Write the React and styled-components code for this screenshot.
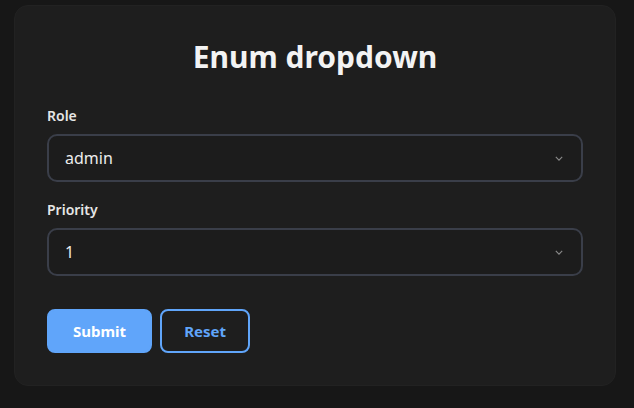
import React, { useState } from "react";
import styled, { createGlobalStyle } from "styled-components";

const roles = ["admin", "editor", "viewer"];
const priorities = ["1", "2", "3", "4", "5"];

export default function App() {
  const [role, setRole] = useState("admin");
  const [priority, setPriority] = useState("1");

  const reset = () => {
    setRole("admin");
    setPriority("1");
  };

  return (
    <>
      <GlobalStyle />
      <Page>
        <Card onSubmit={(e) => e.preventDefault()}>
          <Title>Enum dropdown</Title>
          <Field>
            <Label htmlFor="role">Role</Label>
            <SelectWrap>
              <Select id="role" value={role} onChange={(e) => setRole(e.target.value)}>
                {roles.map((r) => (
                  <option key={r} value={r}>
                    {r}
                  </option>
                ))}
              </Select>
              <Chevron />
            </SelectWrap>
          </Field>
          <Field>
            <Label htmlFor="priority">Priority</Label>
            <SelectWrap>
              <Select
                id="priority"
                value={priority}
                onChange={(e) => setPriority(e.target.value)}
              >
                {priorities.map((p) => (
                  <option key={p} value={p}>
                    {p}
                  </option>
                ))}
              </Select>
              <Chevron />
            </SelectWrap>
          </Field>
          <Actions>
            <Button type="submit" primary>
              Submit
            </Button>
            <Button type="button" onClick={reset}>
              Reset
            </Button>
          </Actions>
        </Card>
      </Page>
    </>
  );
}

function Chevron() {
  return (
    <ChevronIcon viewBox="0 0 10 6" width="8" height="5">
      <path d="M1 1l4 4 4-4" fill="none" stroke="currentColor" strokeWidth="1.4" />
    </ChevronIcon>
  );
}

const GlobalStyle = createGlobalStyle`
  html, body {
    margin: 0;
    background: #171717;
    font-family: "Noto Sans", "Open Sans", sans-serif;
  }
  * { box-sizing: border-box; }
`;

const Page = styled.div`
  padding: 5px 18px 0 14px;
  min-height: 408px;
`;

const Card = styled.form`
  display: flex;
  flex-direction: column;
  background: #1e1e1e;
  border: 1px solid #222222;
  border-radius: 14px;
  padding: 32px;
  width: 602px;
`;

const Title = styled.h1`
  margin: 0 0 30px;
  text-align: center;
  color: #f3f3f3;
  font-size: 30px;
  line-height: 38px;
  font-weight: 700;
`;

const Field = styled.div`
  display: flex;
  flex-direction: column;
  gap: 8px;
  margin-bottom: 18px;
`;

const Label = styled.label`
  color: #e6e6e6;
  font-size: 14px;
  line-height: 20px;
  font-weight: 600;
`;

const SelectWrap = styled.div`
  position: relative;
`;

const Select = styled.select`
  appearance: none;
  width: 100%;
  height: 48px;
  padding: 0 40px 0 16px;
  background: #1c1c1c;
  color: #ececec;
  border: 2px solid #3a3e49;
  border-radius: 10px;
  font-family: inherit;
  font-size: 16px;
  outline: none;
`;

const ChevronIcon = styled.svg`
  position: absolute;
  right: 20px;
  top: 22px;
  color: #8a8a8a;
  pointer-events: none;
`;

const Actions = styled.div`
  display: flex;
  gap: 8px;
  margin-top: 15px;
`;

const Button = styled.button`
  height: 44px;
  padding: 0 ${(p) => (p.primary ? "24px" : "22px")};
  border-radius: 8px;
  font-family: inherit;
  font-size: 15px;
  font-weight: 700;
  cursor: pointer;
  border: 2px solid #60a5fa;
  background: ${(p) => (p.primary ? "#60a5fa" : "transparent")};
  color: ${(p) => (p.primary ? "#ffffff" : "#60a5fa")};
`;
